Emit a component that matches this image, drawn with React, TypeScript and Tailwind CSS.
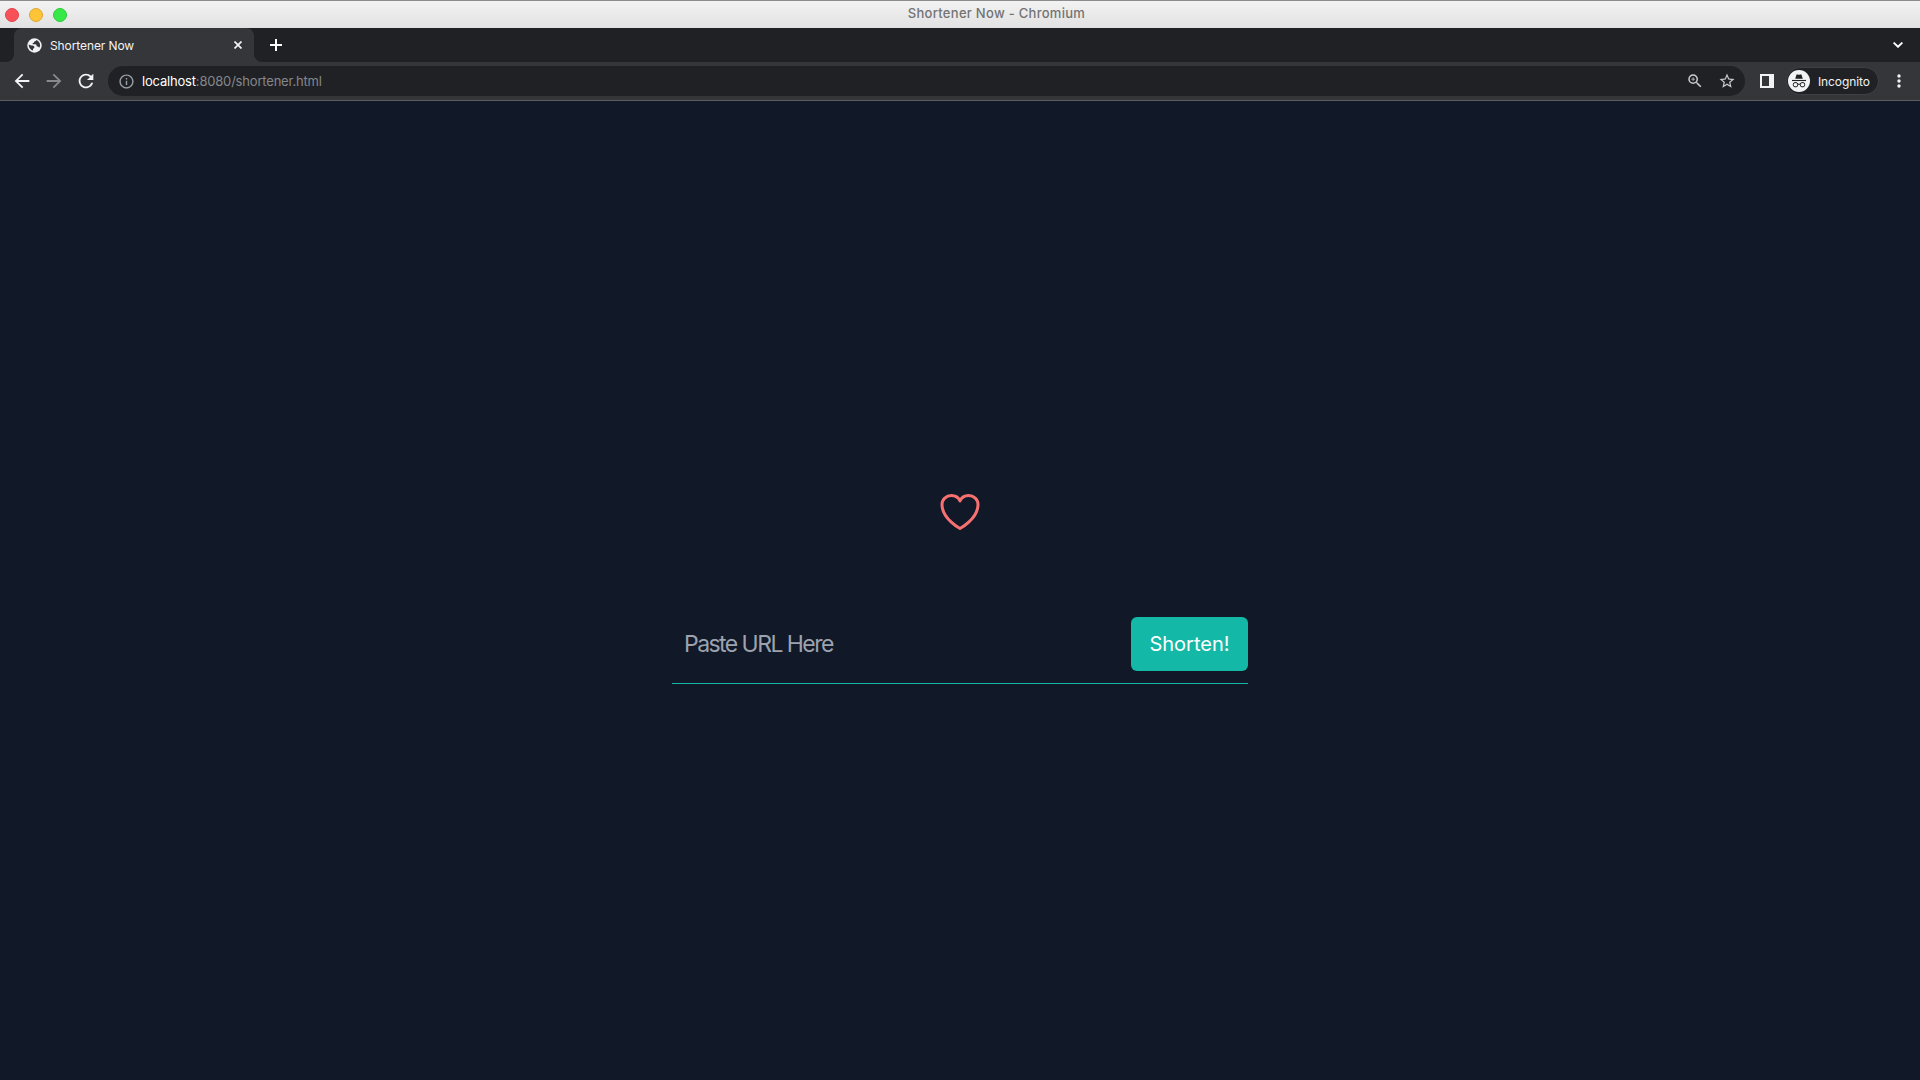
import React from "react";
import {
  MdArrowBack,
  MdArrowForward,
  MdInfoOutline,
  MdRefresh,
  MdStarBorder,
  MdZoomIn,
} from "react-icons/md";

function TitleBar() {
  return (
    <header className="grid h-7 shrink-0 grid-cols-[1fr_auto_1fr] items-center border-t border-[#8e8c8e] bg-linear-to-b from-[#f3f3f3] to-[#e1e1e1] pl-[73px]">
      <div className="-ml-[68px] flex gap-[10px]">
        <span className="size-[14px] rounded-full border border-[#e2444b] bg-[#f9515a]" />
        <span className="size-[14px] rounded-full border border-[#e0a72f] bg-[#fcc436]" />
        <span className="size-[14px] rounded-full border border-[#2bcb3a] bg-[#37e948]" />
      </div>
      <h1 className="pb-[2px] text-[13px] leading-none font-medium tracking-[0.28px] text-[#737373]">
        Shortener Now - Chromium
      </h1>
    </header>
  );
}

function GlobeIcon() {
  return (
    <svg className="size-[15px]" viewBox="0 0 15 15">
      <circle cx="7.5" cy="7.5" r="7.2" fill="#f1f3f4" />
      <g fill="#35363a">
        <path d="M9.2 2.1c-.1 1-.8 1.4-1.7 1.5-.5.1-.3.9-.8 1.2-.6.3-1.2.2-1.1.9.1.6.6.6 1.4.6h1.5c.9 0 1 .8 1.1 1.6.1.5.7.5 1.3.6.6.1.9.7 1.2 1.3.7-.8 1-1.6 1-2.6C13.1 4.8 11.5 2.8 9.2 2.1z" />
        <path d="M1.8 6.2c1 1.1 2.3 1.3 3.6 1.4 1.1.1 2 .5 2 1.6 0 .9-.8 1-1.2 1.4-.4.5-.1 1.2-.2 1.9-2.6-.7-4.5-3.1-4.2-6.3z" />
      </g>
    </svg>
  );
}

function TabStrip() {
  return (
    <div className="flex h-[34px] shrink-0 items-end bg-[#35363a]">
      <div className="h-full w-[14px] rounded-br-lg bg-[#202124]" />
      <div className="-mx-2 h-full w-[256px] bg-[#202124] px-2">
        <div className="relative flex h-full items-center rounded-t-lg bg-[#35363a] pl-[12.5px] text-[#f1f3f4]">
          <span className="absolute bottom-0 -left-2 size-2 bg-[#35363a]">
            <span className="block size-2 rounded-br-lg bg-[#202124]" />
          </span>
          <span className="absolute -right-2 bottom-0 size-2 bg-[#35363a]">
            <span className="block size-2 rounded-bl-lg bg-[#202124]" />
          </span>
          <GlobeIcon />
          <span className="ml-[8.5px] pt-[2px] text-xs tracking-[-0.1px]">Shortener Now</span>
          <svg className="mr-3 ml-auto size-2" viewBox="0 0 8 8" fill="none" stroke="currentColor" strokeWidth="1.7">
            <path d="M.5.5l7 7M7.5.5l-7 7" />
          </svg>
        </div>
      </div>
      <div className="flex h-full flex-1 items-center rounded-bl-lg bg-[#202124] pr-[17px] pl-4 text-white">
        <svg className="size-3" viewBox="0 0 12 12" stroke="currentColor" strokeWidth="2">
          <path d="M6 0v12M0 6h12" />
        </svg>
        <svg className="ml-auto h-[6px] w-[10px]" viewBox="0 0 10 6" fill="none" stroke="currentColor" strokeWidth="1.9">
          <path d="M.6.6L5 4.8 9.4.6" />
        </svg>
      </div>
    </div>
  );
}

function IncognitoBadge() {
  return (
    <svg className="size-[22px]" viewBox="0 0 22 22">
      <circle cx="11" cy="11" r="11" fill="#f1f3f4" />
      <path d="M7.2 8.8l1.2-3.9q.2-.7.9-.5l1.7.4 1.7-.4q.7-.2.9.5l1.2 3.9z" fill="#202124" />
      <path d="M4 10.5h14" stroke="#202124" strokeWidth="1.1" />
      <g fill="none" stroke="#202124" strokeWidth="1">
        <rect x="5.3" y="12.6" width="4.4" height="4.2" rx="1.7" />
        <rect x="12.3" y="12.6" width="4.4" height="4.2" rx="1.7" />
        <path d="M9.7 14.4q1.3-.7 2.6 0" />
      </g>
    </svg>
  );
}

function Toolbar() {
  return (
    <div className="flex h-[39px] shrink-0 items-center border-b border-[#5c5d60] bg-[#35363a] pl-[11px] text-[#f1f3f4]">
      <div className="flex gap-[10px]">
        <MdArrowBack className="size-[22px]" />
        <MdArrowForward className="size-[22px] text-[#88898c]" />
        <MdRefresh className="size-[22px]" />
      </div>
      <div className="ml-[11px] flex h-[30px] w-[1637px] items-center rounded-full bg-[#202124] px-[10px] text-[#9aa0a6]">
        <MdInfoOutline className="size-[17px]" />
        <p className="ml-[7px] pt-px text-[13px] tracking-[-0.19px] text-[#85878b]">
          <span className="text-white">localhost</span>:8080/shortener.html
        </p>
        <MdZoomIn className="ml-auto size-[18px] text-[#c8cbcf]" />
        <MdStarBorder className="-mr-px ml-[14px] size-[18px] text-[#c8cbcf]" />
      </div>
      <svg className="ml-[15px] size-[14px]" viewBox="0 0 14 14">
        <path d="M0 0h14v14H0zM2 2v10h7V2z" fill="currentColor" fillRule="evenodd" />
      </svg>
      <div className="ml-3 flex h-[28px] w-[93px] items-center rounded-full border border-[#3f4043] bg-[#202124] pl-px">
        <IncognitoBadge />
        <span className="ml-2 pt-px text-xs tracking-[-0.1px]">Incognito</span>
      </div>
      <svg className="ml-[17.5px] h-4 w-1" viewBox="0 0 4 16" fill="currentColor">
        <circle cx="2" cy="3" r="1.7" />
        <circle cx="2" cy="8" r="1.7" />
        <circle cx="2" cy="13" r="1.7" />
      </svg>
    </div>
  );
}

function ShortenerPage() {
  return (
    <main className="flex flex-1 flex-col items-center bg-[#111827] pt-[387px]">
      <svg className="size-12 text-[#f87171]" viewBox="0 0 24 24" fill="none" stroke="currentColor" strokeWidth="1.5" strokeLinecap="round" strokeLinejoin="round">
        <path d="M21 8.25c0-2.485-2.099-4.5-4.688-4.5-1.935 0-3.597 1.126-4.312 2.733-.715-1.607-2.377-2.733-4.313-2.733C5.1 3.75 3 5.765 3 8.25c0 7.22 9 12 9 12s9-4.78 9-12z" />
      </svg>
      <form className="mt-[81px] flex h-[67px] w-[576px] items-start border-b border-[#14b8a6]">
        <input
          className="h-[54px] min-w-0 flex-1 bg-transparent pl-3 text-[23px] tracking-[-1.55px] text-white outline-none placeholder:text-[#9ca3af]"
          type="text"
          placeholder="Paste URL Here"
        />
        <button className="h-[54px] w-[117px] rounded-md bg-[#14b8a6] text-xl text-white" type="button">
          Shorten!
        </button>
      </form>
    </main>
  );
}

export default function App() {
  return (
    <div className="flex h-screen w-full flex-col overflow-hidden font-['Inter',sans-serif]">
      <TitleBar />
      <TabStrip />
      <Toolbar />
      <ShortenerPage />
    </div>
  );
}
